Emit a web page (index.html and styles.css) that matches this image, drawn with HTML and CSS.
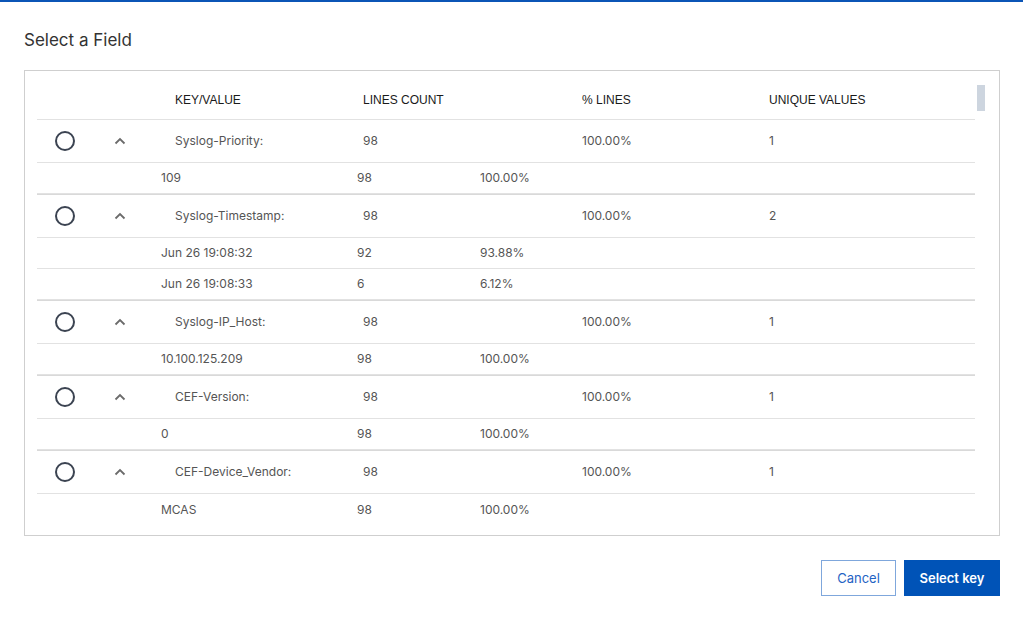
FILE: index.html
```html
<!DOCTYPE html>
<html lang="en">
<head>
<meta charset="utf-8">
<title>Select a Field</title>
<link rel="stylesheet" href="styles.css">
</head>
<body>
<div class="dialog">
  <h1 class="title">Select a Field</h1>
  <div class="panel">
    <div class="table">
      <div class="thead">
        <div class="c-sel"></div>
        <div class="c-key">KEY/VALUE</div>
        <div class="c-count">LINES COUNT</div>
        <div class="c-pct">% LINES</div>
        <div class="c-uniq">UNIQUE VALUES</div>
      </div>

      <div class="group">
        <div class="grow">
          <div class="c-sel"><span class="radio"></span><svg class="chev" width="12" height="8" viewBox="0 0 12 8"><path d="M1.5 6.5 L6 2 L10.5 6.5" fill="none" stroke="#6b6b6b" stroke-width="1.8"/></svg></div>
          <div class="c-key">Syslog-Priority:</div>
          <div class="c-count">98</div>
          <div class="c-pct">100.00%</div>
          <div class="c-uniq">1</div>
        </div>
        <div class="crow"><div class="v-val">109</div><div class="v-count">98</div><div class="v-pct">100.00%</div></div>
      </div>

      <div class="group">
        <div class="grow">
          <div class="c-sel"><span class="radio"></span><svg class="chev" width="12" height="8" viewBox="0 0 12 8"><path d="M1.5 6.5 L6 2 L10.5 6.5" fill="none" stroke="#6b6b6b" stroke-width="1.8"/></svg></div>
          <div class="c-key">Syslog-Timestamp:</div>
          <div class="c-count">98</div>
          <div class="c-pct">100.00%</div>
          <div class="c-uniq">2</div>
        </div>
        <div class="crow"><div class="v-val">Jun 26 19:08:32</div><div class="v-count">92</div><div class="v-pct">93.88%</div></div>
        <div class="crow"><div class="v-val">Jun 26 19:08:33</div><div class="v-count">6</div><div class="v-pct">6.12%</div></div>
      </div>

      <div class="group">
        <div class="grow">
          <div class="c-sel"><span class="radio"></span><svg class="chev" width="12" height="8" viewBox="0 0 12 8"><path d="M1.5 6.5 L6 2 L10.5 6.5" fill="none" stroke="#6b6b6b" stroke-width="1.8"/></svg></div>
          <div class="c-key">Syslog-IP_Host:</div>
          <div class="c-count">98</div>
          <div class="c-pct">100.00%</div>
          <div class="c-uniq">1</div>
        </div>
        <div class="crow"><div class="v-val">10.100.125.209</div><div class="v-count">98</div><div class="v-pct">100.00%</div></div>
      </div>

      <div class="group">
        <div class="grow">
          <div class="c-sel"><span class="radio"></span><svg class="chev" width="12" height="8" viewBox="0 0 12 8"><path d="M1.5 6.5 L6 2 L10.5 6.5" fill="none" stroke="#6b6b6b" stroke-width="1.8"/></svg></div>
          <div class="c-key">CEF-Version:</div>
          <div class="c-count">98</div>
          <div class="c-pct">100.00%</div>
          <div class="c-uniq">1</div>
        </div>
        <div class="crow"><div class="v-val">0</div><div class="v-count">98</div><div class="v-pct">100.00%</div></div>
      </div>

      <div class="group">
        <div class="grow">
          <div class="c-sel"><span class="radio"></span><svg class="chev" width="12" height="8" viewBox="0 0 12 8"><path d="M1.5 6.5 L6 2 L10.5 6.5" fill="none" stroke="#6b6b6b" stroke-width="1.8"/></svg></div>
          <div class="c-key">CEF-Device_Vendor:</div>
          <div class="c-count">98</div>
          <div class="c-pct">100.00%</div>
          <div class="c-uniq">1</div>
        </div>
        <div class="crow"><div class="v-val">MCAS</div><div class="v-count">98</div><div class="v-pct">100.00%</div></div>
      </div>
    </div>
    <div class="thumb"></div>
  </div>
  <div class="actions">
    <button class="btn btn-cancel">Cancel</button>
    <button class="btn btn-primary">Select key</button>
  </div>
</div>
</body>
</html>
```
FILE: styles.css
```css
html, body {
  margin: 0;
  padding: 0;
  background: #ffffff;
}
body {
  font-family: Inter, "Noto Sans", sans-serif;
  color: #555;
}
.dialog {
  border-top: 2px solid #0b55b6;
  padding: 0 23px 0 24px;
}
.title {
  margin: 0 0 18px 0;
  padding-top: 26px;
  height: 24px;
  line-height: 24px;
  font-size: 17px;
  font-weight: 400;
  color: #333;
}
.panel {
  position: relative;
  box-sizing: border-box;
  height: 466px;
  border: 1px solid #cfcfcf;
  padding: 0 24px 0 12px;
  overflow: hidden;
}
.thumb {
  position: absolute;
  left: 952px;
  top: 14px;
  width: 8px;
  height: 26px;
  background: #cdd5df;
}
.thead, .grow {
  display: grid;
  grid-template-columns: 138px 188px 219px 187px 1fr;
}
.thead {
  box-sizing: border-box;
  height: 49px;
  padding-top: 22px;
  border-bottom: 1px solid #e2e2e2;
  font-family: "Liberation Sans", Arial, sans-serif;
  font-size: 12px;
  line-height: 14px;
  color: #1a1a1a;
}
.group {
  border-bottom: 1px solid #d9d9d9;
}
.group:last-child {
  border-bottom: none;
}
.group:last-child .crow:last-child {
  border-bottom: none;
}
.grow {
  box-sizing: border-box;
  height: 43px;
  align-items: center;
  border-bottom: 1px solid #e2e2e2;
  font-size: 12px;
  line-height: 16px;
}
.c-sel {
  display: flex;
  align-items: center;
  padding-left: 18px;
}
.radio {
  display: block;
  box-sizing: border-box;
  width: 20px;
  height: 20px;
  border: 2px solid #3b4351;
  border-radius: 50%;
}
.chev {
  display: block;
  margin-left: 39px;
}
.crow {
  box-sizing: border-box;
  height: 31px;
  display: grid;
  grid-template-columns: 196px 123px 1fr;
  align-items: center;
  padding-left: 124px;
  border-bottom: 1px solid #e2e2e2;
  font-size: 12px;
  line-height: 16px;
}
.actions {
  display: flex;
  justify-content: flex-end;
  gap: 8px;
  margin-top: 24px;
}
.btn {
  box-sizing: border-box;
  height: 36px;
  font-family: Inter, "Noto Sans", sans-serif;
  font-size: 13px;
  cursor: pointer;
  border-radius: 0;
}
.btn-cancel {
  width: 75px;
  background: #fff;
  border: 1px solid #7fa7dc;
  color: #1f63c4;
}
.btn-primary {
  width: 96px;
  background: #0053b7;
  border: 1px solid #0053b7;
  color: #fff;
  font-weight: 600;
}
```
